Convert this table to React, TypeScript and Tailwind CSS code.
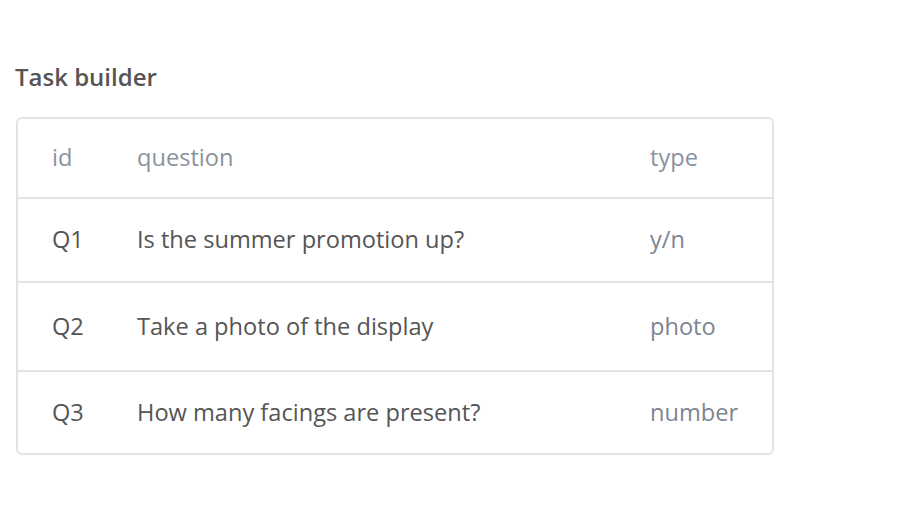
export default function App() {
  const rows = [
    { id: "Q1", q: "Is the summer promotion up?", t: "y/n", h: "h-[84px]" },
    { id: "Q2", q: "Take a photo of the display", t: "photo", h: "h-[89px]" },
    { id: "Q3", q: "How many facings are present?", t: "number", h: "h-[81px]" },
  ];
  return (
    <div className="w-[900px] h-[517px] bg-white pt-[60px] pl-4" style={{ fontFamily: '"Open Sans", sans-serif' }}>
      <h1 className="text-[24px] font-semibold text-[#555] leading-[34px] -ml-[1px]">Task builder</h1>
      <div className="mt-[23px] w-[758px] border-2 border-[#e3e3e3] rounded-[6px] overflow-hidden">
        <div className="flex items-center h-[80px] border-b-2 border-[#e3e3e3] text-[23.6px] text-[#8a929d]">
          <div className="w-[119px] pl-[34px]">id</div>
          <div className="w-[513px]">question</div>
          <div>type</div>
        </div>
        {rows.map((r, i) => (
          <div
            key={r.id}
            className={`flex items-center ${r.h} text-[23.6px] ${i < rows.length - 1 ? "border-b-2 border-[#e3e3e3]" : ""}`}
          >
            <div className="w-[119px] pl-[34px] text-[#555]">{r.id}</div>
            <div className="w-[513px] text-[#555]">{r.q}</div>
            <div className="text-[#7d8592]">{r.t}</div>
          </div>
        ))}
      </div>
    </div>
  );
}
